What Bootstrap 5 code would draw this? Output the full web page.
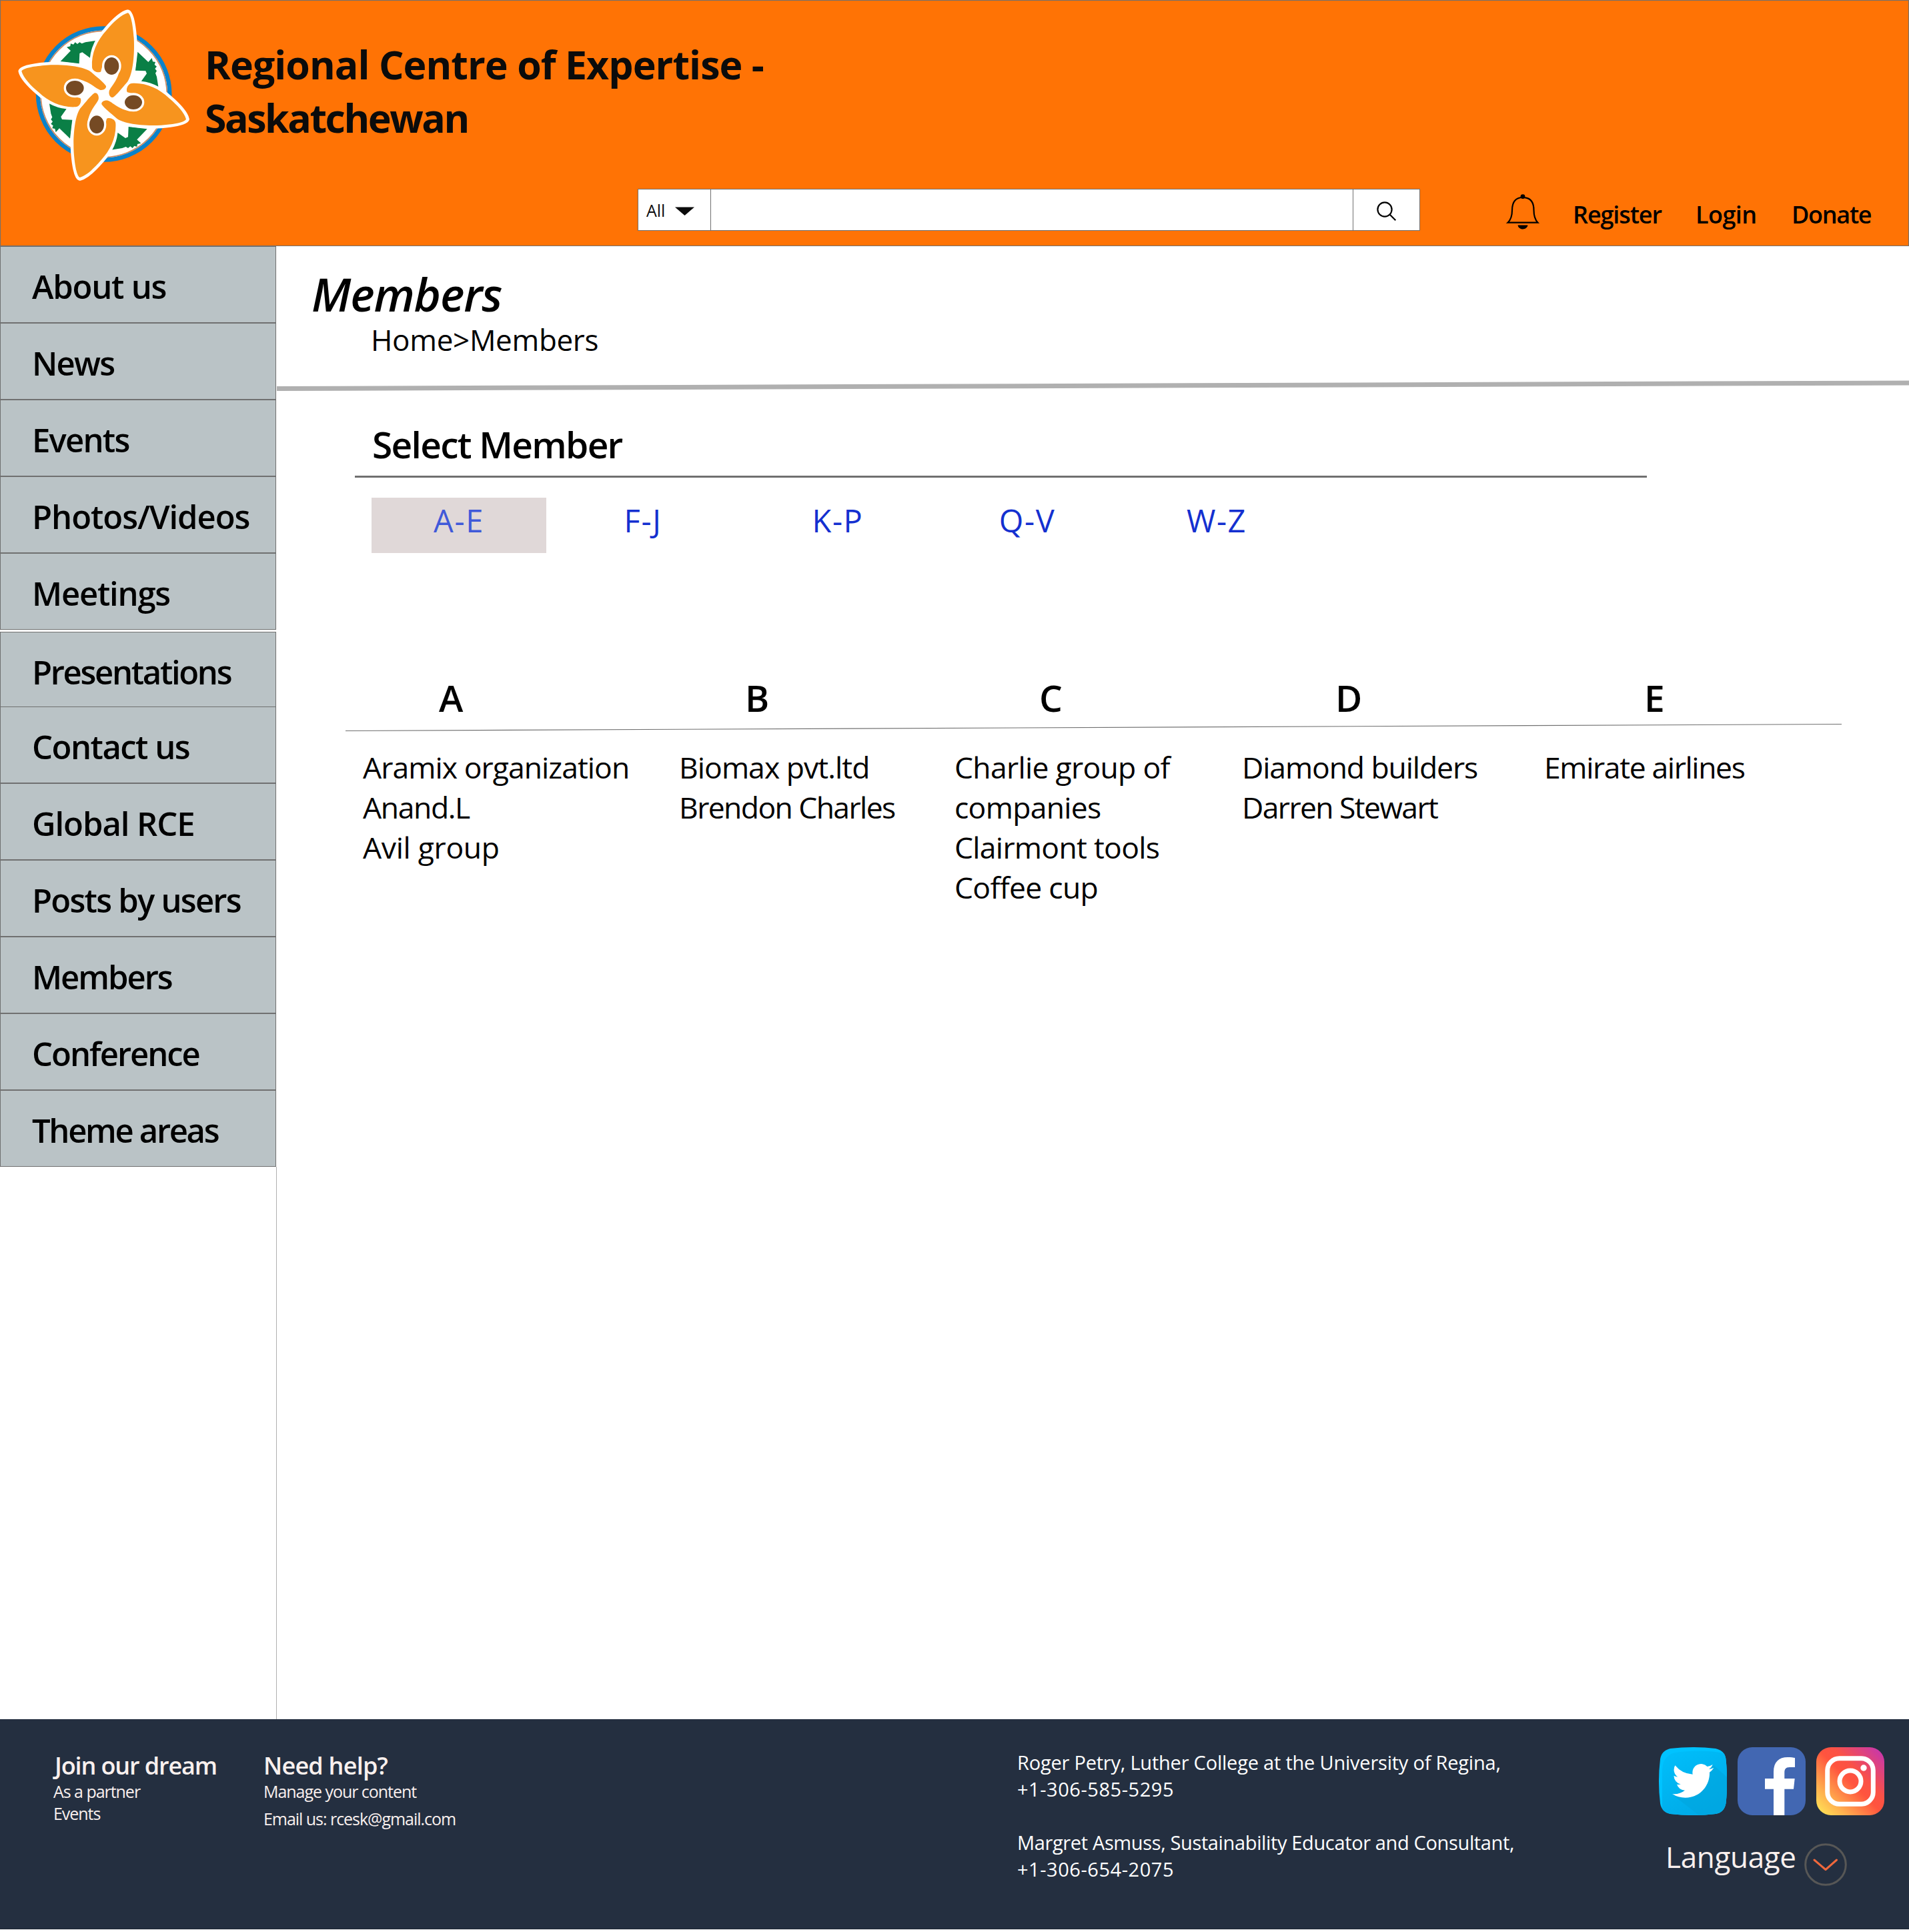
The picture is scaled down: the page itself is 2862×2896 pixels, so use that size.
<!DOCTYPE html>
<html lang="en">
<head>
<meta charset="utf-8">
<meta name="viewport" content="width=device-width, initial-scale=1">
<title>Members - Regional Centre of Expertise - Saskatchewan</title>
<link href="https://cdn.jsdelivr.net/npm/bootstrap@5.3.0/dist/css/bootstrap.min.css" rel="stylesheet">
<style>
  :root { --line: #707070; --brand: #ff7305; --panel: #bac3c6; --navy: #242f40; }
  body { font-family: "Open Sans", "Noto Sans", sans-serif; color: #000; background: #fff; width: 2862px; }
  a { text-decoration: none; color: inherit; }
  svg { display: block; flex: none; }

  /* letter-spacing steps */
  .ls-05 { letter-spacing: -.0075em; } .ls-1 { letter-spacing: -.0125em; } .ls-15 { letter-spacing: -.016em; }
  .ls-2 { letter-spacing: -.0215em; } .ls-25 { letter-spacing: -.025em; } .ls-3 { letter-spacing: -.031em; }
  .ls-35 { letter-spacing: -.036em; } .ls-4 { letter-spacing: -.0415em; } .ls-45 { letter-spacing: -.0475em; }
  .ls-p { letter-spacing: .0187em; }

  /* header */
  .site-header { height: 369px; background: var(--brand); border: 1px solid var(--line); }
  .brand-row { height: 282px; }
  .brand-name { font-size: 59px; font-weight: 700; line-height: 80px; color: #0b0b0b; padding: 55px 0 0 6px; margin: 0; }
  .tool-row { padding-left: 955px; }
  .search-box { width: 1173px; height: 63px; background: #fff; border: 1px solid var(--line); }
  .search-scope { width: 109px; padding-left: 12px; gap: 15px; font-size: 25px; color: #0b0b0b; border-right: 1px solid var(--line); }
  .search-scope span { line-height: 34px; }
  .search-scope svg { margin-top: 3px; }
  .search-go { width: 100px; border-left: 1px solid var(--line); padding: 4px 0 0 35px; }
  .search-text { border: 0; outline: 0; min-width: 0; }
  .bell { margin: 8px 0 0 128px; }
  .top-links { font-size: 36px; font-weight: 600; line-height: 50px; padding: 14px 0 0 49px; }
  .top-links a:nth-child(1) { width: 184px; }
  .top-links a:nth-child(2) { width: 144px; }

  /* body */
  .page-row { height: 2208px; }
  .side { width: 415px; }
  .side-item { width: 414px; height: 115px; background: var(--panel); border: 1px solid var(--line); padding: 26px 0 0 47px; font-size: 49px; font-weight: 600; line-height: 67px; white-space: nowrap; }
  .side-break { height: 3px; }
  .side-short { height: 112px; border-bottom: 0; }
  .side-rest { border-right: 1px solid #b0b0b0; }

  .page-title { font-size: 69px; font-style: italic; font-weight: 600; line-height: 90px; margin: 0; padding: 26px 0 0 52px; }
  .crumbs { font-size: 44px; line-height: 60px; margin-top: -6px; padding-left: 141px; }
  .title-rule { margin-top: 30px; }
  .select-head { width: 1937px; margin: 39px 0 0 117px; padding: 0 0 9px 26px; border-bottom: 3px solid var(--line); }
  .select-head h2 { font-size: 55px; font-weight: 600; line-height: 76px; margin: 0; }
  .ranges { margin: 30px 0 0 142px; gap: 22px; }
  .ranges a { width: 262px; height: 83px; font-size: 47px; line-height: 69px; text-align: center; color: #1430d0; letter-spacing: .034em; }
  .ranges a.active { background: #e0d8d8; color: #4059d9; }
  .ranges a:nth-child(2) { padding-right: 16px; }
  .letters { font-size: 55px; font-weight: 600; line-height: 76px; margin-top: 179px; padding-left: 243px; }
  .letters div:nth-child(1) { width: 459px; }
  .letters div:nth-child(2) { width: 441px; }
  .letters div:nth-child(3) { width: 444px; }
  .letters div:nth-child(4) { width: 463px; }
  .letter-rule { margin: -4px 0 0 103px; }
  .people { margin-top: 20px; padding-left: 129px; font-size: 44.5px; line-height: 60px; }
  .people ul { flex: none; }
  .people ul:nth-child(1) { width: 474px; }
  .people ul:nth-child(2) { width: 413px; }
  .people ul:nth-child(3) { width: 431px; }
  .people ul:nth-child(4) { width: 453px; }

  /* footer */
  .site-footer { height: 315px; background: var(--navy); color: #f9f0ee; border-bottom: 1px solid #1c2533; padding-left: 80px; }
  .foot-col { padding-top: 45px; font-size: 25px; line-height: 33px; white-space: nowrap; }
  .foot-col h3 { font-size: 36px; font-weight: 600; line-height: 50px; margin: 0 0 -3px; }
  .foot-a { width: 315px; }
  .foot-a h3 { padding-left: 2px; }
  .foot-b { width: 1130px; }
  .foot-mail { margin-top: 8px; }
  .foot-c { width: 962px; font-size: 29px; line-height: 40px; color: #fff; }
  .foot-c p { margin-bottom: 40px; }
  .foot-d { padding-top: 42px; }
  .social { gap: 16px; }
  .lang { padding: 32px 0 0 10px; font-size: 44px; line-height: 60px; }
  .lang svg { margin: 10px 0 0 12px; }
</style>
</head>
<body>

<header class="site-header">
  <div class="brand-row d-flex">
    <svg width="300" height="282" viewBox="3 3 900 846" aria-label="Regional Centre of Expertise logo">
      <defs>
        <path id="leaf" d="M272 276 L318 228 L300 212 L316 208 L318 196 L330 200 L338 190 L348 198 L358 190 L368 196 L384 190 L435 182 L405 260 L370 235 L358 240 L356 286 Z"/>
        <path id="petal" d="M575 58 C590 64 598 120 602 170 C607 260 594 345 570 372 C548 396 528 425 508 438 C496 440 488 425 491 410 C498 388 530 365 540 305 C543 270 525 248 500 250 C470 252 462 290 454 322 C445 330 415 322 414 302 C410 240 436 182 480 135 C510 100 545 66 575 58 Z"/>
        <path id="petalEdge" d="M575 57 C590 62 598 120 602 170 C607 260 594 345 570 372 C540 400 520 425 500 435 L454 322 L420 312 C408 240 436 182 480 135 C510 100 545 64 575 57 Z"/>
      </defs>
      <circle cx="467" cy="423" r="296" fill="#fff" stroke="#0a82ca" stroke-width="19"/>
      <circle cx="467" cy="423" r="284" fill="none" stroke="#c98a62" stroke-width="5"/>
      <g fill="#0a7f46">
        <use href="#leaf"/><use href="#leaf" transform="rotate(90 467 428)"/><use href="#leaf" transform="rotate(180 467 428)"/><use href="#leaf" transform="rotate(270 467 428)"/>
      </g>
      <g fill="#fff" stroke="#fff" stroke-width="27" stroke-linejoin="round">
        <use href="#petalEdge"/><use href="#petalEdge" transform="rotate(90 467 428)"/><use href="#petalEdge" transform="rotate(180 467 428)"/><use href="#petalEdge" transform="rotate(270 467 428)"/>
      </g>
      <g fill="#f7941e">
        <use href="#petal"/><use href="#petal" transform="rotate(90 467 428)"/><use href="#petal" transform="rotate(180 467 428)"/><use href="#petal" transform="rotate(270 467 428)"/>
      </g>
      <g fill="#754a24" stroke="#fff" stroke-width="10">
        <ellipse cx="502" cy="297" rx="38" ry="44"/><ellipse cx="600" cy="460" rx="44" ry="37"/><ellipse cx="435" cy="560" rx="38" ry="45"/><ellipse cx="337" cy="396" rx="45" ry="38"/>
      </g>
    </svg>
    <h1 class="brand-name"><span class="ls-15">Regional Centre of Expertise -</span><br><span class="ls-4">Saskatchewan</span></h1>
  </div>
  <div class="tool-row d-flex align-items-start">
    <form class="search-box d-flex">
      <div class="search-scope d-flex align-items-center">
        <span>All</span>
        <svg width="29" height="13" viewBox="0 0 29 13"><path d="M0 .5H29L14.5 13Z" fill="#0b0b0b"/></svg>
      </div>
      <input class="search-text flex-grow-1" type="text" aria-label="Search">
      <div class="search-go d-flex align-items-center">
        <svg width="30" height="30" viewBox="0 0 30 30" fill="none" stroke="#000" stroke-width="2.2"><circle cx="12" cy="12" r="10.6"/><path d="M19.5 19.5L28.3 28.3"/></svg>
      </div>
    </form>
    <svg class="bell" width="52" height="54" viewBox="0 0 52 54">
      <circle cx="26" cy="3.600" r="3.400" fill="#000"/>
      <path d="M3.500 42.700C8.500 38 10 32 10 24C10 12 15 5 26 5C37 5 42.500 12 42.500 24C42.500 32 44 38 48.500 42.700Z" fill="none" stroke="#000" stroke-width="2.200"/>
      <path d="M18.500 46.500H33.500C33 50 30 52.500 26 52.500C22 52.500 19 50 18.500 46.500Z" fill="#000"/>
    </svg>
    <nav class="top-links d-flex">
      <a href="#" class="ls-3">Register</a><a href="#" class="ls-15">Login</a><a href="#" class="ls-35">Donate</a>
    </nav>
  </div>
</header>

<div class="page-row d-flex">
  <aside class="side d-flex flex-column flex-shrink-0">
    <a href="#" class="side-item ls-25">About us</a>
    <a href="#" class="side-item ls-35">News</a>
    <a href="#" class="side-item ls-35">Events</a>
    <a href="#" class="side-item ls-2">Photos/Videos</a>
    <a href="#" class="side-item ls-25">Meetings</a>
    <div class="side-break"></div>
    <a href="#" class="side-item side-short ls-45">Presentations</a>
    <a href="#" class="side-item ls-3">Contact us</a>
    <a href="#" class="side-item ls-2">Global RCE</a>
    <a href="#" class="side-item ls-35">Posts by users</a>
    <a href="#" class="side-item ls-4">Members</a>
    <a href="#" class="side-item ls-4">Conference</a>
    <a href="#" class="side-item ls-45">Theme areas</a>
    <div class="side-rest flex-grow-1"></div>
  </aside>

  <main class="flex-grow-1">
    <h2 class="page-title ls-15">Members</h2>
    <div class="crumbs ls-05"><a href="#">Home</a>&gt;Members</div>
    <svg class="title-rule" width="2447" height="20" viewBox="0 0 2447 20"><path d="M0 13.500L2447 5" stroke="#b0b0b0" stroke-width="7"/></svg>

    <div class="select-head"><h2 class="ls-3">Select Member</h2></div>
    <nav class="ranges d-flex">
      <a href="#" class="active">A-E</a><a href="#">F-J</a><a href="#">K-P</a><a href="#">Q-V</a><a href="#">W-Z</a>
    </nav>

    <div class="letters d-flex"><div>A</div><div>B</div><div>C</div><div>D</div><div>E</div></div>
    <svg class="letter-rule" width="2243" height="20" viewBox="0 0 2243 20"><path d="M0 15.500L2243 5.500" stroke="#707070" stroke-width="1.100"/></svg>
    <div class="people d-flex">
      <ul class="list-unstyled mb-0 ls-2"><li>Aramix organization</li><li class="ls-3">Anand.L</li><li class="ls-05">Avil group</li></ul>
      <ul class="list-unstyled mb-0 ls-2"><li>Biomax pvt.ltd</li><li class="ls-35">Brendon Charles</li></ul>
      <ul class="list-unstyled mb-0 ls-15"><li>Charlie group of companies</li><li>Clairmont tools</li><li>Coffee cup</li></ul>
      <ul class="list-unstyled mb-0 ls-25"><li>Diamond builders</li><li class="ls-35">Darren Stewart</li></ul>
      <ul class="list-unstyled mb-0 ls-3"><li>Emirate airlines</li></ul>
    </div>
  </main>
</div>

<footer class="site-footer d-flex">
  <div class="foot-col foot-a ls-4">
    <h3 class="ls-3">Join our dream</h3>
    <div>As a partner</div>
    <div>Events</div>
  </div>
  <div class="foot-col foot-b ls-4">
    <h3 class="ls-2">Need help?</h3>
    <div>Manage your content</div>
    <div class="foot-mail">Email us: rcesk@gmail.com</div>
  </div>
  <div class="foot-col foot-c">
    <p><span class="ls-05">Roger Petry, Luther College at the University of Regina,</span><br><span class="ls-p">+1-306-585-5295</span></p>
    <p><span class="ls-1">Margret Asmuss, Sustainability Educator and Consultant,</span><br><span class="ls-p">+1-306-654-2075</span></p>
  </div>
  <div class="foot-d">
    <div class="social d-flex">
      <svg width="102" height="102" viewBox="0 0 102 102">
        <defs>
          <linearGradient id="tw" x1="0" y1="0" x2=".5" y2="1"><stop offset="0" stop-color="#00bffb"/><stop offset="1" stop-color="#00abe8"/></linearGradient>
          <clipPath id="twc"><path d="M17 2Q51-2 85 2Q99 5 100.500 18Q104 51 100.500 84Q98 98 85 100Q51 104 17 100Q4 97 2 84Q-2 51 2 18Q4 5 17 2Z"/></clipPath>
        </defs>
        <g clip-path="url(#twc)">
          <rect width="102" height="102" fill="#00c3ff"/>
          <path d="M5 100V34Q6 8 32 7Q70 3 102 10V102H5Z" fill="url(#tw)"/>
          <path d="M82 27L102 45V102H60L24 74Z" fill="#00a5de" opacity=".6"/>
        </g>
        <path transform="translate(20 17.200) scale(3.900)" fill="#fff" d="M5.026 15c6.038 0 9.341-5.003 9.341-9.334 0-.14 0-.282-.006-.422A6.685 6.685 0 0 0 16 3.542a6.658 6.658 0 0 1-1.889.518 3.301 3.301 0 0 0 1.447-1.817 6.533 6.533 0 0 1-2.087.793A3.286 3.286 0 0 0 7.875 6.030a9.325 9.325 0 0 1-6.767-3.429 3.289 3.289 0 0 0 1.018 4.382A3.323 3.323 0 0 1 .640 6.575v.045a3.288 3.288 0 0 0 2.632 3.218 3.203 3.203 0 0 1-.865.115 3.230 3.230 0 0 1-.614-.057 3.283 3.283 0 0 0 3.067 2.277A6.588 6.588 0 0 1 .780 13.580a6.320 6.320 0 0 1-.780-.045A9.344 9.344 0 0 0 5.026 15z"/>
      </svg>
      <svg width="102" height="102" viewBox="0 0 102 102">
        <rect width="102" height="102" rx="22" fill="#4267b2"/>
        <path fill="#fff" d="M54 102V62.700H41V47H54V37C54 22 62 15 75 15C80 15 84 15.500 86 16V30H78C72 30 70.300 33 70.300 38V47H85.700L84 62.700H70.300V102Z"/>
      </svg>
      <svg width="102" height="102" viewBox="0 0 102 102">
        <defs><linearGradient id="ig" x1="0" y1="1" x2="1" y2="0"><stop offset=".06" stop-color="#ffdd55"/><stop offset=".22" stop-color="#ffb04f"/><stop offset=".5" stop-color="#ff543e"/><stop offset=".62" stop-color="#fb5245"/><stop offset=".95" stop-color="#c837ab"/></linearGradient></defs>
        <rect width="102" height="102" rx="22" fill="url(#ig)"/>
        <g fill="none" stroke="#fff" stroke-width="7"><rect x="16.700" y="16.700" width="68.600" height="68.600" rx="18"/><circle cx="51" cy="51" r="16"/></g>
        <circle cx="71" cy="31" r="4.700" fill="#fff"/>
      </svg>
    </div>
    <div class="lang d-flex">
      <span class="ls-05">Language</span>
      <svg width="64" height="64" viewBox="0 0 64 64" fill="none" stroke-width="3"><circle cx="32" cy="32" r="30.300" stroke="#575756"/><path d="M15 25L32 39.500L48.500 25" stroke="#f0683c" stroke-linecap="round" stroke-linejoin="round"/></svg>
    </div>
  </div>
</footer>
<script src="https://cdn.jsdelivr.net/npm/bootstrap@5.3.0/dist/js/bootstrap.bundle.min.js"></script>
</body>
</html>
